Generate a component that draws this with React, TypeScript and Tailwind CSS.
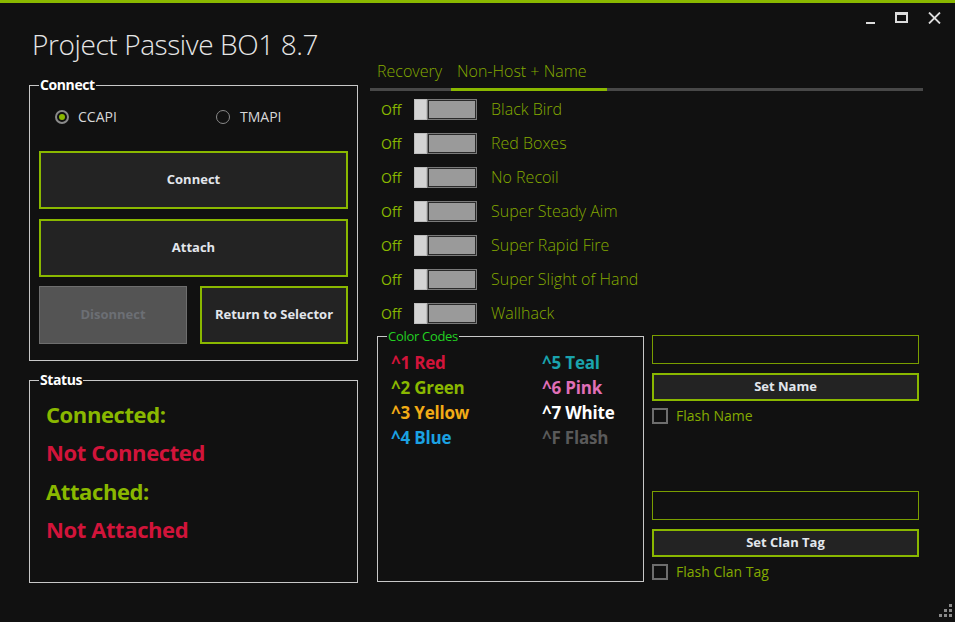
import React from "react";

const F = { fontFamily: '"Open Sans", "Noto Sans", sans-serif' };

function GroupBox({
  label,
  labelClass,
  className,
  children,
}: {
  label: string;
  labelClass: string;
  className: string;
  children: React.ReactNode;
}) {
  return (
    <div className={"relative border border-[#c8c8c8] " + className}>
      <div className={"absolute left-[9px] top-[-10px] bg-[#111111] px-[1px] leading-[18px] " + labelClass}>
        {label}
      </div>
      {children}
    </div>
  );
}

function Toggle() {
  return (
    <div className="flex h-[21px] w-[63px]">
      <div className="w-[13px] h-full bg-[#d4d4d4] border border-[#bdbdbd]" />
      <div className="flex-1 h-full border border-[#7a7a7a] bg-[#2a2a2a] p-[1px]">
        <div className="w-full h-full bg-[#9a9a9a]" />
      </div>
    </div>
  );
}

function GreenButton({ label, className }: { label: string; className: string }) {
  return (
    <div
      className={
        "flex items-center justify-center border-2 border-[#8ab800] bg-[#232323] text-[13px] font-bold text-[#e2e6ec] " +
        className
      }
    >
      {label}
    </div>
  );
}

const toggles = [
  "Black Bird",
  "Red Boxes",
  "No Recoil",
  "Super Steady Aim",
  "Super Rapid Fire",
  "Super Slight of Hand",
  "Wallhack",
];

const codes: [string, string][] = [
  ["^1 Red", "text-[#d2143a]"],
  ["^5 Teal", "text-[#1aa3ad]"],
  ["^2 Green", "text-[#8ab800]"],
  ["^6 Pink", "text-[#e06fb8]"],
  ["^3 Yellow", "text-[#f2ab16]"],
  ["^7 White", "text-[#ffffff]"],
  ["^4 Blue", "text-[#1ba1e2]"],
  ["^F Flash", "text-[#5a5a5a]"],
];

export default function App() {
  return (
    <div
      style={F}
      className="relative w-[955px] h-[622px] overflow-hidden bg-[#111111] border-t-[3px] border-[#8ab800] flex"
    >
      {/* window controls */}
      <div className="absolute right-[14px] top-[8px] flex items-start gap-[20px]">
        <div className="w-[9px] h-[2px] bg-[#dcdcdc] mt-[11px]" />
        <div className="w-[13px] h-[11px] border-2 border-t-[3px] border-[#dcdcdc] mt-[1px]" />
        <svg width="13" height="12" viewBox="0 0 13 12" className="mt-[1px]">
          <path d="M1 0.5 L12 11.5 M12 0.5 L1 11.5" stroke="#dcdcdc" strokeWidth="1.8" />
        </svg>
      </div>

      {/* resize grip */}
      <svg width="14" height="14" viewBox="0 0 14 14" className="absolute right-[2px] bottom-[4px]">
        {[
          [10, 0],
          [5, 5],
          [10, 5],
          [0, 10],
          [5, 10],
          [10, 10],
        ].map(([x, y], i) => (
          <rect key={i} x={x} y={y} width="3" height="3" fill="#8a8a8a" />
        ))}
      </svg>

      {/* left column */}
      <div className="w-[329px] ml-[29px] flex flex-col">
        <div className="h-[82px] pt-[23px] pl-[3px] text-[28px] font-light text-[#e6e6e6] leading-[36px] tracking-[-0.4px]">
          Project Passive BO1 8.7
        </div>

        <GroupBox
          label="Connect"
          labelClass="text-[14px] font-bold text-white tracking-[-0.4px]"
          className="h-[276px] px-[9px]"
        >
          <div className="h-[65px] flex items-center pb-[4px]">
            <div className="flex items-center w-[177px] pl-[16px]">
              <div className="w-[14px] h-[14px] rounded-full border-2 border-[#8a8a8a] flex items-center justify-center">
                <div className="w-[6px] h-[6px] rounded-full bg-[#8ab800]" />
              </div>
              <span className="ml-[9px] text-[14px] text-[#d8d8d8]">CCAPI</span>
            </div>
            <div className="flex items-center">
              <div className="w-[14px] h-[14px] rounded-full border-[1.5px] border-[#8a8a8a]" />
              <span className="ml-[10px] text-[14px] text-[#d8d8d8]">TMAPI</span>
            </div>
          </div>
          <div className="flex flex-col gap-[10px]">
            <GreenButton label="Connect" className="h-[58px]" />
            <GreenButton label="Attach" className="h-[58px]" />
            <div className="flex gap-[13px] mt-[-1px]">
              <div className="w-[148px] h-[58px] flex items-center justify-center border border-[#6e6e6e] bg-[#545454] text-[13px] font-bold text-[#6c6f74]">
                Disonnect
              </div>
              <GreenButton label="Return to Selector" className="w-[148px] h-[58px]" />
            </div>
          </div>
        </GroupBox>

        <GroupBox
          label="Status"
          labelClass="text-[14px] font-bold text-white tracking-[-0.4px]"
          className="mt-[19px] h-[203px] pl-[16px] pt-[14px]"
        >
          <div className="flex flex-col text-[22px] font-bold leading-[38.3px] tracking-[-0.4px]">
            <div className="text-[#8ab800]">Connected:</div>
            <div className="text-[#d2143a]">Not Connected</div>
            <div className="text-[#8ab800]">Attached:</div>
            <div className="text-[#d2143a]">Not Attached</div>
          </div>
        </GroupBox>
      </div>

      {/* right column */}
      <div className="ml-[12px] w-[553px] flex flex-col pt-[50px]">
        <div className="flex h-[35px] items-center text-[16px] text-[#84aa00] font-light">
          <div className="w-[81px] pl-[7px]">Recovery</div>
          <div className="pl-[6px]">Non-Host + Name</div>
        </div>
        <div className="h-[3px] bg-[#484848] flex">
          <div className="ml-[81px] w-[156px] h-full bg-[#8ab800]" />
        </div>

        <div className="flex flex-col pt-[1px]">
          {toggles.map((t) => (
            <div key={t} className="h-[34px] flex items-center">
              <span className="w-[44px] pl-[11px] text-[14px] text-[#8ab800]">Off</span>
              <Toggle />
              <span className="ml-[14px] text-[16px] font-light text-[#84aa00]">{t}</span>
            </div>
          ))}
        </div>

        <div className="flex mt-[6px]">
          <GroupBox
            label="Color Codes"
            labelClass="text-[13px] text-[#22d022] tracking-[-0.3px]"
            className="ml-[7px] w-[267px] h-[246px] pt-[13px] pl-[13px]"
          >
            <div className="grid grid-cols-[151px_1fr] text-[17px] font-bold leading-[25px] tracking-[-0.2px]">
              {codes.map(([c, cls]) => (
                <div key={c} className={cls}>
                  {c}
                </div>
              ))}
            </div>
          </GroupBox>

          <div className="ml-[8px] w-[267px] flex flex-col">
            <div className="h-[29px] border border-[#7a9e00] bg-[#111111] mt-[-1px]" />
            <GreenButton label="Set Name" className="h-[28px] mt-[9px]" />
            <div className="flex items-center mt-[7px] h-[16px]">
              <div className="w-[16px] h-[16px] border-2 border-[#6e6e6e]" />
              <span className="ml-[8px] text-[14px] leading-[16px] text-[#84aa00]">Flash Name</span>
            </div>
            <div className="h-[29px] border border-[#7a9e00] mt-[67px]" />
            <GreenButton label="Set Clan Tag" className="h-[28px] mt-[9px]" />
            <div className="flex items-center mt-[7px] h-[16px]">
              <div className="w-[16px] h-[16px] border-2 border-[#6e6e6e]" />
              <span className="ml-[8px] text-[14px] leading-[16px] text-[#84aa00]">Flash Clan Tag</span>
            </div>
          </div>
        </div>
      </div>
    </div>
  );
}
